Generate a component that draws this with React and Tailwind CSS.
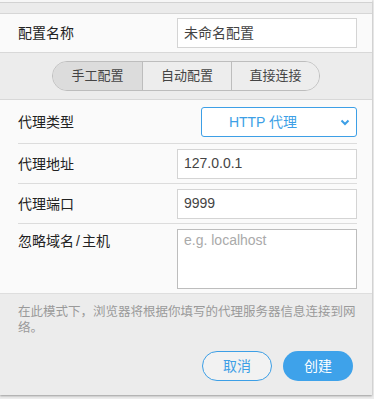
import React from "react";

const font = { fontFamily: '"Liberation Sans", "Noto Sans CJK SC", sans-serif' };

function Row({ label, children, className = "" }) {
  return (
    <div className={`flex items-center justify-between ml-[18px] border-b border-[#dcdcdc] ${className}`}>
      <div className="text-[14px] text-[#222] leading-[20px]">{label}</div>
      {children}
    </div>
  );
}

export default function App() {
  return (
    <div className="w-[374px] h-[399px] bg-[#ececec] overflow-hidden" style={font}>
      <div className="w-[372px] bg-[#ececec] shadow-[0_1px_2px_rgba(0,0,0,0.35)]">
        <div className="h-[3px] bg-[#f6f6f6] border-b border-[#d2d2d2]" />
        <div className="h-[11px] bg-[#ebebeb] border-b border-[#d6d6d6]" />
        <div className="h-[39px] bg-[#fafafa] border-b border-[#d8d8d8] flex items-center justify-between pl-[18px] pr-[15px]">
          <div className="text-[14px] text-[#222] leading-[20px]">配置名称</div>
          <div className="w-[180px] h-[30px] border border-[#d4d4d4] bg-white flex items-center pl-[6px] text-[14px] text-[#444]">
            未命名配置
          </div>
        </div>
        <div className="h-[47px] bg-[#ececec] border-b border-[#d8d8d8] flex items-center justify-center">
          <div className="flex h-[30px] rounded-full border border-[#bdbdbd] overflow-hidden text-[13px] text-[#444]">
            <div className="w-[89px] flex items-center justify-center bg-[#dcdcdc]">手工配置</div>
            <div className="w-[89px] flex items-center justify-center border-l border-[#bdbdbd] bg-[#ededed]">自动配置</div>
            <div className="w-[88px] flex items-center justify-center border-l border-[#bdbdbd] bg-[#ededed]">直接连接</div>
          </div>
        </div>
        <div className="bg-[#fafafa] pr-[15px] border-b border-[#dedede]">
          <Row label="代理类型" className="h-[44px] pt-[1px]">
            <div className="w-[156px] h-[30px] border border-[#3d9fe6] rounded-[3px] bg-white flex items-center relative">
              <div className="flex-1 text-center text-[14px] text-[#3d9fe6] pr-[32px]">HTTP 代理</div>
              <svg className="absolute right-[6px] top-[11px]" width="10" height="8" viewBox="0 0 10 8">
                <polyline points="1.5,1.5 5,5 8.5,1.5" fill="none" stroke="#3d9fe6" strokeWidth="2" />
              </svg>
            </div>
          </Row>
          <Row label="代理地址" className="h-[40px]">
            <div className="w-[180px] h-[30px] border border-[#d4d4d4] bg-white flex items-center pl-[6px] text-[14px] text-[#444]">
              127.0.0.1
            </div>
          </Row>
          <Row label="代理端口" className="h-[40px]">
            <div className="w-[180px] h-[30px] border border-[#d4d4d4] bg-white flex items-center pl-[6px] text-[14px] text-[#444]">
              9999
            </div>
          </Row>
          <div className="flex items-start justify-between ml-[18px] h-[69px] pt-[5px]">
            <div className="text-[14px] text-[#222] leading-[20px] pt-[2px]">
              忽略域名<span className="px-[2px]">/</span>主机
            </div>
            <div className="w-[180px] h-[60px] border border-[#bdbdbd] bg-white pl-[6px] pt-[1px] text-[14px] text-[#aaa] leading-[18px]">
              e.g. localhost
            </div>
          </div>
        </div>
        <div className="h-[101px] bg-[#ececec] pl-[18px] pt-[10px]">
          <div className="w-[342px] text-[12.5px] leading-[16px] text-[#9a9a9a]">
            在此模式下，浏览器将根据你填写的代理服务器信息连接到网络。
          </div>
          <div className="flex justify-end gap-[11px] mt-[15px] pr-[19px]">
            <div className="w-[70px] h-[30px] rounded-full border border-[#3d9fe6] flex items-center justify-center text-[14px] text-[#3d9fe6] bg-[#f2f2f2]">
              取消
            </div>
            <div className="w-[70px] h-[30px] rounded-full bg-[#3ea2ea] flex items-center justify-center text-[14px] text-white">
              创建
            </div>
          </div>
        </div>
      </div>
    </div>
  );
}
